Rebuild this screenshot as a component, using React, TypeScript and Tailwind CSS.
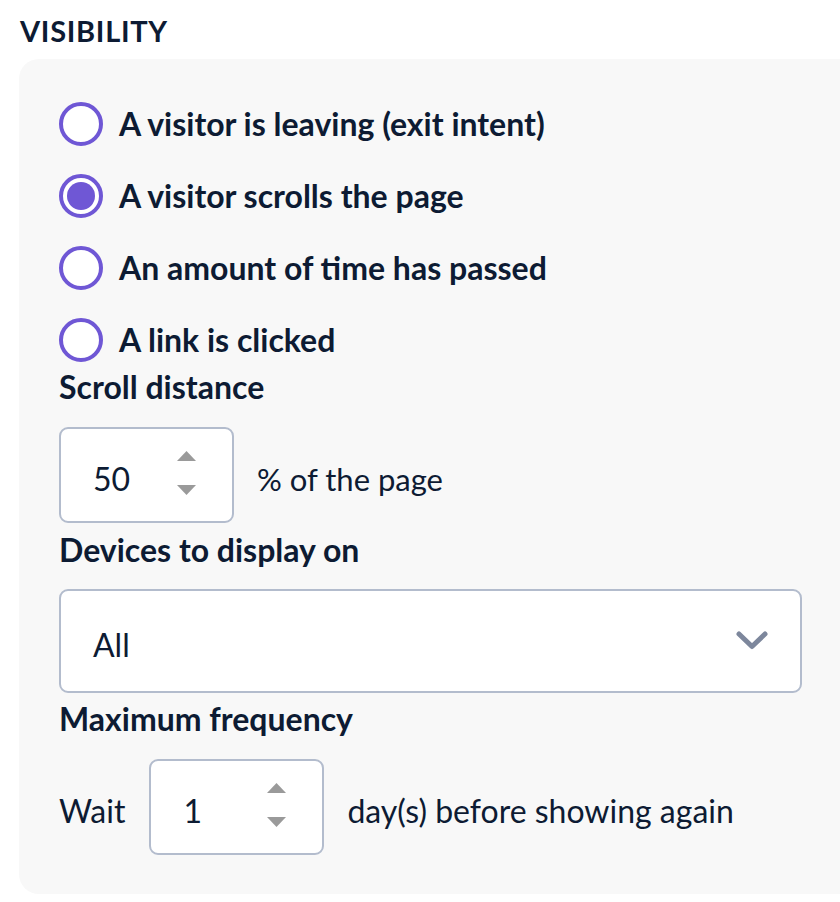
import { useState } from 'react';

const options = [
  'A visitor is leaving (exit intent)',
  'A visitor scrolls the page',
  'An amount of time has passed',
  'A link is clicked',
];

function Spinner() {
  return (
    <div className="flex flex-col items-center gap-[24px] mb-[5px]">
      <svg width="19" height="10" viewBox="0 0 19 10">
        <path d="M9.5 0 L19 10 L0 10 Z" fill="#9a9a9a" />
      </svg>
      <svg width="19" height="10" viewBox="0 0 19 10">
        <path d="M0 0 L19 0 L9.5 10 Z" fill="#9a9a9a" />
      </svg>
    </div>
  );
}

function NumberBox({ value }: { value: string }) {
  return (
    <div className="w-[175px] h-[96px] bg-white border-2 border-[#b3bccd] rounded-[9px] flex items-center pl-[32px] pr-[36px] justify-between">
      <span className="pt-[8px] text-[32px] text-[#0d1b33]">{value}</span>
      <Spinner />
    </div>
  );
}

export default function App() {
  const [selected, setSelected] = useState(1);

  return (
    <div
      className="w-[840px] h-[902px] bg-white overflow-hidden text-[#0d1b33]"
      style={{ fontFamily: 'Lato, "Open Sans", sans-serif' }}
    >
      <div className="pl-[20px] pt-[14px] h-[59px] text-[29px] font-bold leading-[34px] tracking-[0.7px]">
        VISIBILITY
      </div>

      <div className="ml-[19px] w-[840px] bg-[#f8f8f8] rounded-[20px] pt-[29px] pb-[39px] pl-[40px]">
        {/* radio options */}
        <div className="flex flex-col">
          {options.map((label, i) => (
            <button
              key={label}
              onClick={() => setSelected(i)}
              className="h-[72px] flex items-center gap-[16px] text-left"
            >
              <span className="w-[44px] h-[44px] rounded-full border-[4px] border-[#6f57d5] bg-white flex items-center justify-center">
                {selected === i && <span className="w-[28px] h-[28px] rounded-full bg-[#6f57d5]" />}
              </span>
              <span className="text-[32px] font-bold leading-[36px]">{label}</span>
            </button>
          ))}
        </div>

        {/* scroll distance */}
        <div className="-mt-[1px] text-[32px] font-bold leading-[24px] h-[24px]">Scroll distance</div>
        <div className="mt-[28px] flex items-center gap-[23px]">
          <NumberBox value="50" />
          <span className="pt-[8px] text-[31px]">% of the page</span>
        </div>

        {/* devices */}
        <div className="mt-[15px] text-[32px] font-bold leading-[24px] h-[24px]">Devices to display on</div>
        <div className="mt-[27px] w-[743px] h-[104px] bg-white border-2 border-[#b3bccd] rounded-[9px] flex items-center justify-between pl-[32px] pr-[31px]">
          <span className="pt-[8px] text-[32px]">All</span>
          <svg width="34" height="24" viewBox="0 0 34 24">
            <path d="M4 5 L17 17.5 L30 5" fill="none" stroke="#7d879c" strokeWidth="5" strokeLinecap="round" strokeLinejoin="round" />
          </svg>
        </div>

        {/* frequency */}
        <div className="mt-[14px] text-[32px] font-bold leading-[24px] h-[24px]">Maximum frequency</div>
        <div className="mt-[28px] flex items-center">
          <span className="pt-[8px] text-[32px] mr-[24px]">Wait</span>
          <NumberBox value="1" />
          <span className="pt-[8px] text-[32px] ml-[23px]">day(s) before showing again</span>
        </div>
      </div>
    </div>
  );
}
